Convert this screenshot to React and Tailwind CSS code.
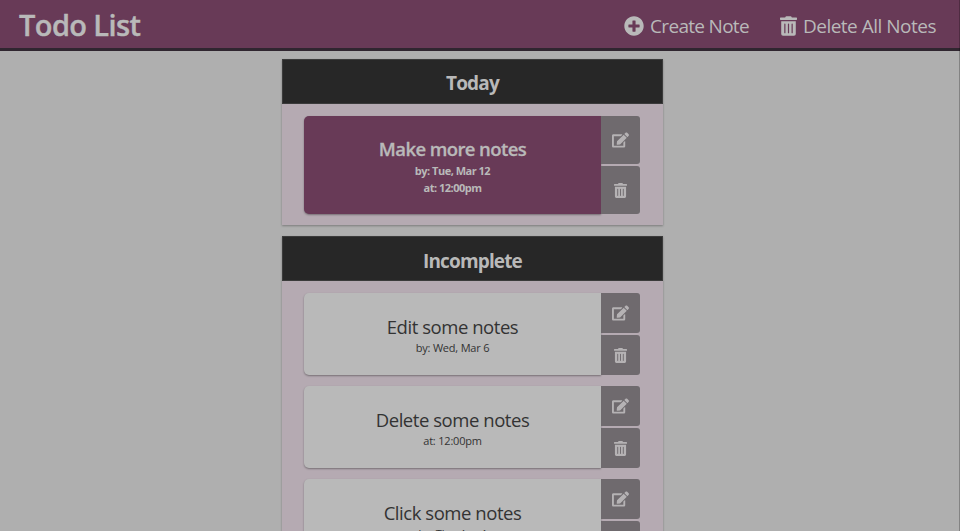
import { FaEdit, FaPlusCircle, FaTrashAlt } from "react-icons/fa";

const incomplete = [
  { title: "Edit some notes", details: "by: Wed, Mar 6" },
  { title: "Delete some notes", details: "at: 12:00pm" },
  { title: "Click some notes", details: "by: Thu, Apr 4" },
];

function NoteActions() {
  return (
    <div className="flex w-[39px] flex-col gap-[2px] text-[#b5b2b4]">
      <button aria-label="Edit note" className="flex flex-1 items-center justify-center rounded-r-[3px] bg-[#6f6a6e]">
        <FaEdit className="h-4 w-[17px]" />
      </button>
      <button aria-label="Delete note" className="flex flex-1 items-center justify-center rounded-r-[3px] bg-[#6f6a6e]">
        <FaTrashAlt className="h-[15px] w-[13px]" />
      </button>
    </div>
  );
}

function Section({ title, children }) {
  return (
    <section className="w-[381px] bg-[#b5aab2] shadow-[0_1px_2px_rgba(0,0,0,0.3)]">
      <h2 className="flex h-[45px] items-center justify-center border border-[#3b3b3b] bg-[#272727] text-[#b9b9b9]">
        {title}
      </h2>
      <div className="flex flex-col gap-[11px] px-[22px] pt-3 pb-[11px]">{children}</div>
    </section>
  );
}

export default function App() {
  return (
    <div className="relative h-[531px] overflow-hidden bg-[#afafaf] font-['Open_Sans','Noto_Sans',sans-serif]">
      <header className="flex h-[51px] items-center justify-between border-b-[3px] border-[#302630] bg-[#683a57] pr-6 pl-[19px] text-[#b9b9b9]">
        <h1 className="pt-[1px] text-[29px] font-semibold leading-none tracking-[-0.6px] [-webkit-text-stroke:0.4px_#b9b9b9]">Todo List</h1>
        <nav className="flex gap-[31px] pt-[3px] text-[19px] leading-6">
          <button className="flex items-center gap-[6px]">
            <FaPlusCircle className="size-5" />
            <span className="tracking-[-0.7px]">Create Note</span>
          </button>
          <button className="flex items-center gap-[6px]">
            <FaTrashAlt className="h-5 w-[17px]" />
            <span className="tracking-[-0.5px]">Delete All Notes</span>
          </button>
        </nav>
      </header>
      <main className="flex w-[945px] flex-col items-center gap-[11px] pt-2">
        <Section title={<span className="pt-[2px] text-[19px] font-bold leading-6 tracking-[-0.8px]">Today</span>}>
          <article className="flex h-[98px]">
            <div className="flex w-[297px] flex-col items-center rounded-l-[5px] bg-[#683a57] pt-5 text-[#b9b9b9] shadow-[0_1px_2px_rgba(0,0,0,0.35)]">
              <h3 className="text-[18.5px] font-semibold leading-[26px] tracking-[-0.6px] [-webkit-text-stroke:0.3px_#b9b9b9]">Make more notes</h3>
              <p className="text-[11px] font-bold leading-[17px] tracking-[-0.5px]">by: Tue, Mar 12</p>
              <p className="text-[11px] font-bold leading-[17px] tracking-[-0.5px]">at: 12:00pm</p>
            </div>
            <NoteActions />
          </article>
        </Section>
        <Section title={<span className="pt-1 text-[19px] font-bold leading-6 tracking-[-0.85px]">Incomplete</span>}>
          {incomplete.map((note) => (
            <article key={note.title} className="flex h-[82px]">
              <div className="flex w-[297px] flex-col items-center rounded-l-[5px] bg-[#b9b9b9] pt-[21px] text-[#333333] shadow-[0_1px_2px_rgba(0,0,0,0.35)]">
                <h3 className="text-[18.5px] leading-[26px] tracking-[-0.45px]">{note.title}</h3>
                <p className="-mt-px text-[11px] leading-[17px] tracking-[-0.2px]">{note.details}</p>
              </div>
              <NoteActions />
            </article>
          ))}
        </Section>
      </main>
      <div className="absolute inset-y-0 right-0 w-px bg-black/25" />
    </div>
  );
}
